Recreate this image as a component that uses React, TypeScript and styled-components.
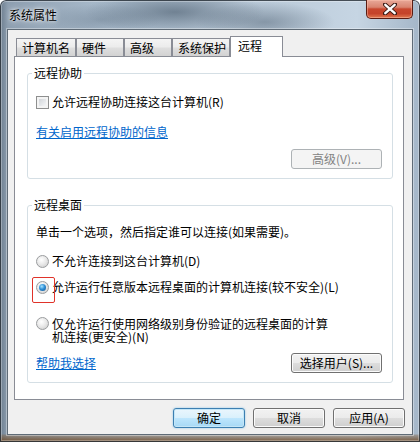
import React from 'react';
import styled, { createGlobalStyle, css } from 'styled-components';

const Global = createGlobalStyle`
  html, body { margin: 0; padding: 0; }
  body {
    width: 420px; height: 442px; overflow: hidden;
    font-family: "Noto Sans CJK SC", "Liberation Sans", sans-serif;
    font-size: 12px; color: #000;
  }
  * { box-sizing: border-box; }
`;

const Window = styled.div`
  width: 420px;
  height: 442px;
  display: flex;
  flex-direction: column;
  padding: 0 7px 7px 7px;
  border-radius: 6px 6px 0 0;
  background:
    linear-gradient(to top, rgba(110, 72, 36, 0.9) 0px, rgba(130, 100, 70, 0.4) 7px, transparent 8px),
    radial-gradient(ellipse 90px 22px at 175px 12px, rgba(60, 78, 96, 0.55), transparent),
    radial-gradient(ellipse 70px 20px at 265px 22px, rgba(70, 88, 106, 0.45), transparent),
    radial-gradient(ellipse 60px 16px at 100px 20px, rgba(90, 108, 126, 0.35), transparent),
    linear-gradient(90deg, #6c7d8e 0px, #8e9fb0 8px, #a9bbcc 25%, #b6c6d5 55%, #c6d5e3 85%, #a4b6c8 100%);
  box-shadow: inset 0 0 0 1px rgba(20, 28, 36, 0.75), inset 0 0 0 2px rgba(255, 255, 255, 0.3);
`;

const TitleBar = styled.div`
  height: 29px;
  flex: none;
  display: flex;
  justify-content: space-between;
  align-items: flex-start;
`;

const Title = styled.span`
  margin: 8px 0 0 2px;
  line-height: 14px;
  font-size: 12px;
  color: #000;
  text-shadow: 0 0 6px rgba(255, 255, 255, 0.95), 0 0 3px rgba(255, 255, 255, 0.9);
`;

const CloseButton = styled.div`
  width: 47px;
  height: 19px;
  display: flex;
  align-items: center;
  justify-content: center;
  border: 1px solid #5a1c12;
  border-top: none;
  border-radius: 0 0 5px 5px;
  background: linear-gradient(#e8a898 0%, #d98470 40%, #c8472e 50%, #c5432a 75%, #e0784f 100%);
  box-shadow: inset 0 0 0 1px rgba(255, 200, 180, 0.45);
`;

const Client = styled.div`
  flex: 1;
  display: flex;
  flex-direction: column;
  padding: 6px 8px 6px 6px;
  background: #f0f0f0;
  border: 1px solid #5f6b76;
  box-shadow: 0 0 0 1px rgba(255, 255, 255, 0.35);
`;

const TabRow = styled.div`
  display: flex;
  align-items: flex-end;
  height: 20px;
  padding-left: 2px;
  position: relative;
  z-index: 1;
`;

const Tab = styled.div<{ $w: number; $active?: boolean }>`
  width: ${(p) => p.$w}px;
  height: 18px;
  border: 1px solid #898c95;
  border-bottom: none;
  padding: 1px 0 0 5px;
  line-height: 15px;
  white-space: nowrap;
  background: linear-gradient(#f4f4f4 0%, #ececec 45%, #dedede 55%, #d2d2d2 100%);
  ${(p) =>
    p.$active &&
    css`
      height: 21px;
      margin-bottom: -1px;
      padding: 1px 0 0 7px;
      background: #fff;
    `}
`;

const Panel = styled.div`
  height: 344px;
  display: flex;
  flex-direction: column;
  gap: 19px;
  padding: 9px 10px 16px 12px;
  background: #fff;
  border: 1px solid #898c95;
`;

const Group = styled.fieldset`
  margin: 0;
  min-inline-size: 0;
  display: flex;
  flex-direction: column;
  padding: 0 10px 9px 8px;
  border: 1px solid #d5dfe5;
  border-radius: 3px;
`;

const Legend = styled.legend`
  padding: 0 2px;
  margin-left: -4px;
  line-height: 14px;
`;

const Row = styled.div<{ $top: number; $h?: number }>`
  display: flex;
  align-items: center;
  gap: 3px;
  margin-top: ${(p) => p.$top}px;
  min-height: ${(p) => p.$h ?? 14}px;
  line-height: 14px;
  white-space: nowrap;
  position: relative;
`;

const TallRow = styled(Row)`
  align-items: flex-start;
  white-space: normal;
  line-height: 13px;
`;

const ButtonRow = styled(Row)<{ $split?: boolean }>`
  justify-content: ${(p) => (p.$split ? 'space-between' : 'flex-end')};
  height: 20px;
`;

const Checkbox = styled.span`
  flex: none;
  width: 13px;
  height: 13px;
  border: 1px solid #8e8f8f;
  background: linear-gradient(135deg, #c9ccd1 0%, #eef0f2 70%, #fafafa 100%);
  box-shadow: inset 0 0 0 2px #f4f4f4;
`;

const Radio = styled.span<{ $checked?: boolean }>`
  flex: none;
  width: 13px;
  height: 13px;
  border-radius: 50%;
  border: 1px solid #9a9c9e;
  display: flex;
  align-items: center;
  justify-content: center;
  background: radial-gradient(circle at 40% 35%, #ffffff 0%, #eaeaea 45%, #c8c8c8 100%);
  &::after {
    content: '';
    display: ${(p) => (p.$checked ? 'block' : 'none')};
    width: 7px;
    height: 7px;
    border-radius: 50%;
    background: radial-gradient(circle at 40% 35%, #a8e4ff 0%, #2f8fd6 45%, #0e4f8c 100%);
  }
`;

const OptionText = styled.span<{ $max?: number }>`
  ${(p) => p.$max && css`max-width: ${p.$max}px;`}
`;

const Link = styled.a`
  color: #0066cc;
  text-decoration: underline;
  line-height: 14px;
  cursor: pointer;
`;

const Highlight = styled.span`
  position: absolute;
  left: -4px;
  top: -3px;
  width: 23px;
  height: 26px;
  border: 1px solid #e0332a;
  border-radius: 2px;
  pointer-events: none;
`;

const PushButton = styled.button<{ $w: number; $kind?: 'default' | 'normal' | 'disabled' }>`
  width: ${(p) => p.$w}px;
  height: 20px;
  padding: 0;
  font-family: inherit;
  font-size: 12px;
  line-height: 14px;
  color: #000;
  border-radius: 3px;
  border: 1px solid #707070;
  background: linear-gradient(#f2f2f2 0%, #ebebeb 50%, #dddddd 51%, #cfcfcf 100%);
  box-shadow: inset 0 0 0 1px #fbfbfb;
  ${(p) =>
    p.$kind === 'default' &&
    css`
      border-color: #3c7fb1;
      background: linear-gradient(#eaf6fd 0%, #d9f0fc 50%, #bee6fd 51%, #a7d9f5 100%);
      box-shadow: inset 0 0 0 1px #c4e6f7, 0 0 2px rgba(60, 160, 220, 0.6);
    `}
  ${(p) =>
    p.$kind === 'disabled' &&
    css`
      color: #838383;
      border-color: #adb2b5;
      background: #f4f4f4;
      box-shadow: none;
    `}
`;

const Footer = styled.div`
  display: flex;
  justify-content: flex-end;
  gap: 8px;
  margin: 8px -1px 0 0;
`;

export default function App() {
  return (
    <>
      <Global />
      <Window>
        <TitleBar>
          <Title>系统属性</Title>
          <CloseButton>
            <svg width="14" height="12" viewBox="0 0 14 12">
              <path d="M2 1.5 L12 10.5 M12 1.5 L2 10.5" stroke="#3a1a14" strokeWidth="4.2" strokeLinecap="round" />
              <path d="M2.3 1.8 L11.7 10.2 M11.7 1.8 L2.3 10.2" stroke="#ffffff" strokeWidth="2.4" strokeLinecap="round" />
            </svg>
          </CloseButton>
        </TitleBar>
        <Client>
          <TabRow>
            <Tab $w={60}>计算机名</Tab>
            <Tab $w={48}>硬件</Tab>
            <Tab $w={48}>高级</Tab>
            <Tab $w={58}>系统保护</Tab>
            <Tab $w={53} $active>远程</Tab>
          </TabRow>
          <Panel>
            <Group>
              <Legend>远程协助</Legend>
              <Row $top={15}>
                <Checkbox />
                <span>允许远程协助连接这台计算机(R)</span>
              </Row>
              <Row $top={16}>
                <Link>有关启用远程协助的信息</Link>
              </Row>
              <ButtonRow $top={10} $h={20}>
                <PushButton $w={91} $kind="disabled">高级(V)...</PushButton>
              </ButtonRow>
            </Group>
            <Group>
              <Legend>远程桌面</Legend>
              <Row $top={13}>
                <span>单击一个选项，然后指定谁可以连接(如果需要)。</span>
              </Row>
              <Row $top={15}>
                <Radio />
                <span>不允许连接到这台计算机(D)</span>
              </Row>
              <Row $top={12}>
                <Radio $checked />
                <span>允许运行任意版本远程桌面的计算机连接(较不安全)(L)</span>
                <Highlight />
              </Row>
              <TallRow $top={23} $h={26}>
                <Radio />
                <OptionText $max={280}>仅允许运行使用网络级别身份验证的远程桌面的计算机连接(更安全)(N)</OptionText>
              </TallRow>
              <ButtonRow $top={10} $h={20} $split>
                <Link>帮助我选择</Link>
                <PushButton $w={91}>选择用户(S)...</PushButton>
              </ButtonRow>
            </Group>
          </Panel>
          <Footer>
            <PushButton $w={72} $kind="default">确定</PushButton>
            <PushButton $w={72}>取消</PushButton>
            <PushButton $w={72}>应用(A)</PushButton>
          </Footer>
        </Client>
      </Window>
    </>
  );
}
